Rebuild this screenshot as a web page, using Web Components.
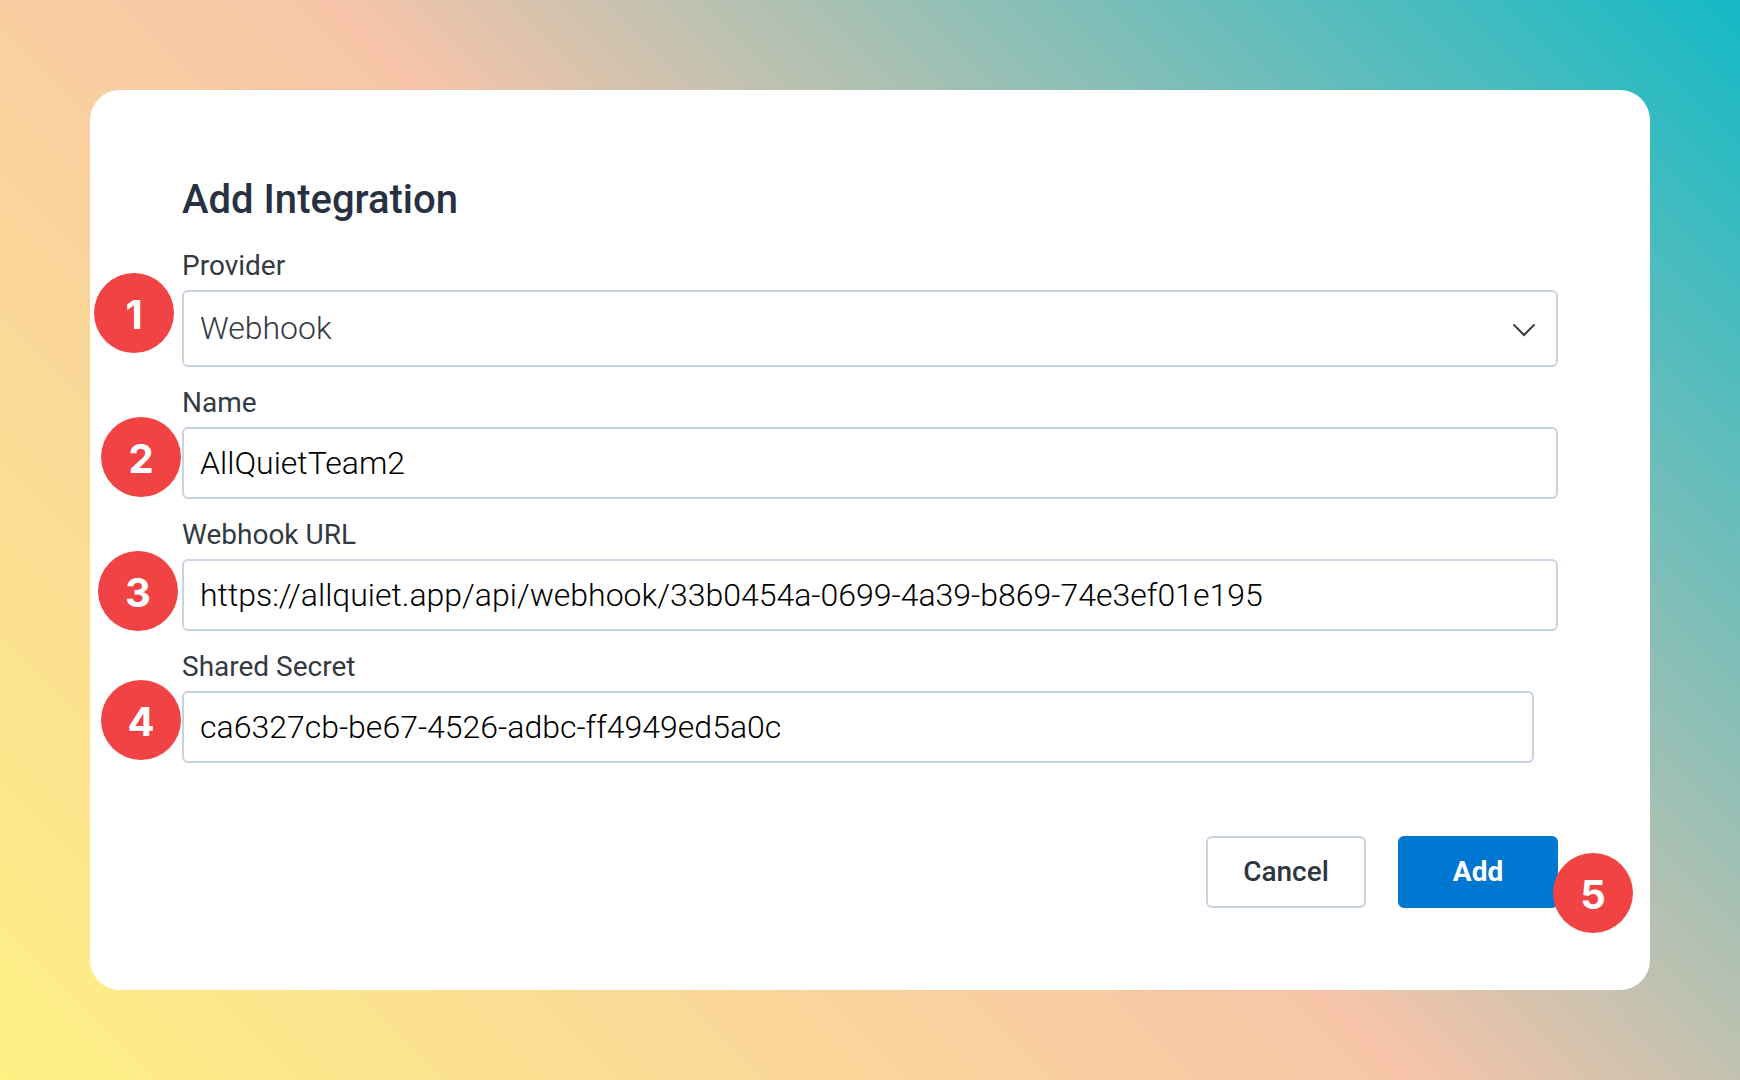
<!DOCTYPE html>
<html lang="en">
<head>
<meta charset="utf-8">
<title>Add Integration</title>
<style>
  html, body { margin: 0; }
  body {
    min-height: 100vh;
    font-family: Roboto, "Liberation Sans", sans-serif;
    color: #343a42;
    background: linear-gradient(45deg, #fef083 0%, #f7c4a9 50%, #14b9c5 100%);
  }
</style>
</head>
<body>
<integration-card></integration-card>
<script>
class StepBadge extends HTMLElement {
  constructor() {
    super();
    this.attachShadow({ mode: "open" }).innerHTML = `
      <style>
        :host {
          position: absolute; z-index: 1; box-sizing: border-box;
          display: flex; align-items: center; justify-content: center;
          width: 80px; height: 80px; padding-top: 3px; border-radius: 50%;
          background: #f14344; color: #fff;
          font: 700 40px/48px Inter, sans-serif;
        }
      </style><slot></slot>`;
  }
}

class FormField extends HTMLElement {
  constructor() {
    super();
    const label = this.getAttribute("label");
    const value = this.getAttribute("value");
    const select = this.getAttribute("type") === "select";
    const control = select
      ? `<select id="control"><option>${value}</option></select>
         <svg viewBox="0 0 24 14" fill="none" stroke="#343a42" stroke-width="2" aria-hidden="true"><path d="M1.4 1.4 12 12 22.6 1.4"/></svg>`
      : `<input id="control" type="text" value="${value}">`;
    this.attachShadow({ mode: "open" }).innerHTML = `
      <style>
        :host { display: flex; flex-direction: column; gap: 6px; position: relative; }
        label { font-size: 28px; line-height: 36px; }
        .box { display: grid; align-items: center; }
        .box > * { grid-area: 1 / 1; }
        input, select {
          box-sizing: border-box; width: 100%; height: 72px; margin: 0; padding: 0 16px;
          border: 2px solid #c9d2e1; border-radius: 6px; background: #fff; outline: 0;
          font: 300 32px/40px Roboto, "Liberation Sans", sans-serif; color: #000;
        }
        select { appearance: none; height: 77px; padding-bottom: 2px; color: #343a42; }
        svg { justify-self: end; width: 24px; height: 14px; margin: 2px 22px 0 0; pointer-events: none; }
      </style>
      <label for="control">${label}</label>
      <div class="box">${control}</div>
      <slot></slot>`;
  }
}

class ActionButton extends HTMLElement {
  constructor() {
    super();
    this.attachShadow({ mode: "open" }).innerHTML = `
      <style>
        :host { display: block; position: relative; }
        button {
          box-sizing: border-box; min-width: 160px; height: 72px; padding: 0 24px;
          border: 2px solid #c9d2e1; border-radius: 6px; background: #fff; color: #2f363e;
          font: 500 28px/36px Roboto, "Liberation Sans", sans-serif; cursor: pointer;
        }
        :host([primary]) button { background: #0077d0; border-color: #0077d0; color: #fff; font-weight: 700; }
      </style>
      <button type="button"><slot></slot></button>
      <slot name="badge"></slot>`;
  }
}

class IntegrationCard extends HTMLElement {
  constructor() {
    super();
    this.attachShadow({ mode: "open" }).innerHTML = `
      <style>
        :host { display: flex; box-sizing: border-box; min-height: 100vh; padding: 90px; }
        form {
          flex: 1; display: flex; flex-direction: column; gap: 18px;
          padding: 82px 92px; border-radius: 30px; background: #fff;
        }
        h1 { margin: 0 0 2px; font-size: 40px; line-height: 56px; font-weight: 500; color: #273142; }
        .short { margin-right: 24px; }
        .actions { display: flex; justify-content: flex-end; gap: 32px; margin-top: 55px; }
      </style>
      <form>
        <h1>Add Integration</h1>
        <form-field type="select" label="Provider" value="Webhook">
          <step-badge style="left:-88px; top:25px">1</step-badge>
        </form-field>
        <form-field label="Name" value="AllQuietTeam2">
          <step-badge style="left:-81px; top:32px">2</step-badge>
        </form-field>
        <form-field label="Webhook URL" value="https://allquiet.app/api/webhook/33b0454a-0699-4a39-b869-74e3ef01e195">
          <step-badge style="left:-84px; top:34px">3</step-badge>
        </form-field>
        <form-field class="short" label="Shared Secret" value="ca6327cb-be67-4526-adbc-ff4949ed5a0c">
          <step-badge style="left:-81px; top:31px">4</step-badge>
        </form-field>
        <div class="actions">
          <action-button>Cancel</action-button>
          <action-button primary>Add<step-badge slot="badge" style="right:-75px; top:17px">5</step-badge></action-button>
        </div>
      </form>`;
  }
}

customElements.define("step-badge", StepBadge);
customElements.define("form-field", FormField);
customElements.define("action-button", ActionButton);
customElements.define("integration-card", IntegrationCard);
</script>
</body>
</html>
